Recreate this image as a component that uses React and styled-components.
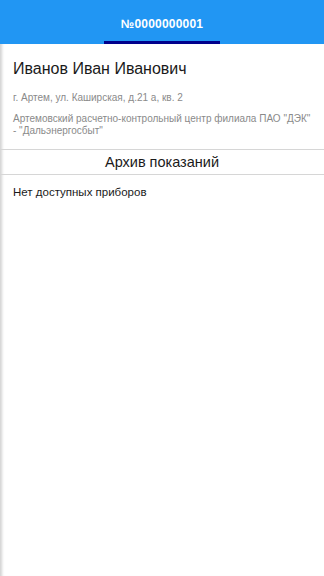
import styled, { createGlobalStyle } from 'styled-components';

const GlobalStyle = createGlobalStyle`
  html, body {
    margin: 0;
    padding: 0;
    height: 100%;
    background: #ffffff;
    font-family: "Liberation Sans", Arial, sans-serif;
  }
  #root {
    height: 100%;
  }
`;

const Page = styled.div`
  display: flex;
  flex-direction: column;
  height: 100%;
  min-height: 576px;
`;

const TabBar = styled.div`
  height: 44px;
  background: #2196f3;
  display: flex;
  justify-content: center;
  flex-shrink: 0;
`;

const Tab = styled.div`
  width: 116px;
  display: flex;
  align-items: center;
  justify-content: center;
  color: #ffffff;
  font-size: 12px;
  font-weight: 700;
  letter-spacing: 0.2px;
  box-sizing: border-box;
  padding-top: 6px;
  border-bottom: ${props => (props.active ? '3px solid #00008b' : '3px solid transparent')};
`;

const Content = styled.div`
  flex: 1;
  box-shadow: inset 4px 0 3px -2px rgba(0, 0, 0, 0.18);
`;

const Info = styled.div`
  padding: 13px 12px 12px 13px;
`;

const Name = styled.div`
  font-size: 16px;
  color: #1a1a1a;
  line-height: 24px;
`;

const Address = styled.div`
  font-size: 10px;
  color: #8a8a8a;
  margin-top: 11px;
`;

const Company = styled.div`
  font-size: 10px;
  color: #8a8a8a;
  line-height: 12px;
  margin-top: 10px;
`;

const SectionTitle = styled.div`
  border-top: 1px solid #d6d6d6;
  border-bottom: 1px solid #d6d6d6;
  height: 24px;
  display: flex;
  align-items: center;
  justify-content: center;
  font-size: 14.5px;
  color: #1a1a1a;
`;

const Empty = styled.div`
  padding: 11px 13px;
  font-size: 11.5px;
  color: #1a1a1a;
`;

export default function App() {
  return (
    <Page>
      <GlobalStyle />
      <TabBar>
        <Tab active>№0000000001</Tab>
      </TabBar>
      <Content>
        <Info>
          <Name>Иванов Иван Иванович</Name>
          <Address>г. Артем, ул. Каширская, д.21 а, кв. 2</Address>
          <Company>
            Артемовский расчетно-контрольный центр филиала ПАО "ДЭК" - "Дальэнергосбыт"
          </Company>
        </Info>
        <SectionTitle>Архив показаний</SectionTitle>
        <Empty>Нет доступных приборов</Empty>
      </Content>
    </Page>
  );
}
